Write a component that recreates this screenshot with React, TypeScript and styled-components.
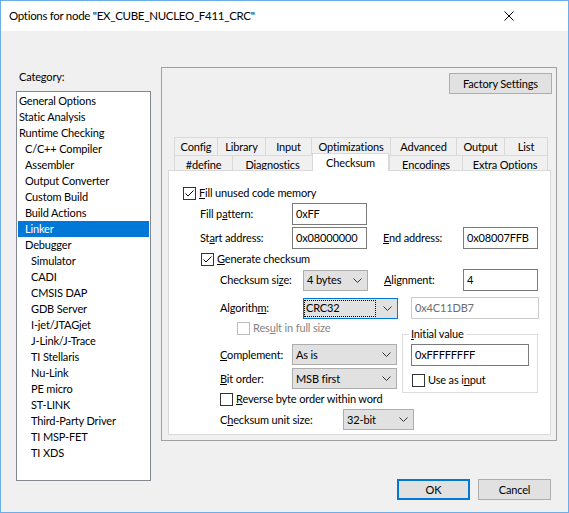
import React from "react";
import styled, { createGlobalStyle } from "styled-components";

const GlobalStyle = createGlobalStyle`
  html, body {
    margin: 0;
    padding: 0;
    background: #ffffff;
  }
  body {
    font-family: Lato, "Noto Sans", sans-serif;
    font-size: 11px;
    letter-spacing: -0.15px;
    line-height: 16px;
    color: #000000;
  }
  * {
    box-sizing: border-box;
  }
  u {
    text-underline-offset: 1px;
  }
`;

const Window = styled.div`
  width: 569px;
  height: 513px;
  border: 1px solid #6caeea;
  background: #f0f0f0;
  display: flex;
  flex-direction: column;
  overflow: hidden;
`;

const TitleBar = styled.div`
  flex: none;
  height: 30px;
  background: #ffffff;
  display: flex;
  align-items: center;
  justify-content: space-between;
  padding-left: 8px;
  font-size: 11.5px;
  letter-spacing: -0.3px;
`;

const CloseIcon = styled.svg`
  width: 10px;
  height: 10px;
  margin-right: 54px;
`;

const Body = styled.div`
  flex: 1;
  display: flex;
  gap: 10px;
  padding: 36px 10px 0 15px;
`;

const LeftCol = styled.div`
  width: 135px;
  flex: none;
  padding-top: 2px;
`;

const CategoryLabel = styled.div`
  padding-left: 3px;
  margin-bottom: 6px;
`;

const ListBox = styled.div`
  height: 390px;
  border: 1px solid #828790;
  background: #ffffff;
  padding: 1px 1px 0;
`;

const ListItem = styled.div<{ $level: number; $selected?: boolean }>`
  height: 16px;
  line-height: 16px;
  padding-left: ${(p) => 1 + p.$level * 6}px;
  white-space: nowrap;
  background: ${(p) => (p.$selected ? "#0078d7" : "transparent")};
  color: ${(p) => (p.$selected ? "#ffffff" : "#000000")};
`;

const RightCol = styled.div`
  width: 396px;
  flex: none;
  display: flex;
  flex-direction: column;
`;

const Panel = styled.div`
  height: 374px;
  border: 1px solid #a0a0a0;
  display: flex;
  flex-direction: column;
`;

const Button = styled.div<{ $w: number; $default?: boolean }>`
  width: ${(p) => p.$w}px;
  height: 21px;
  flex: none;
  display: flex;
  align-items: center;
  justify-content: center;
  background: #e1e1e1;
  border: ${(p) => (p.$default ? "2px solid #0078d7" : "1px solid #adadad")};
`;

const FactoryButton = styled(Button)`
  align-self: flex-end;
  margin: 5px 4px 0 0;
`;

const Tabs = styled.div`
  margin: 43px 0 0 12px;
  width: 374px;
`;

const TabRow = styled.div<{ $h: number }>`
  display: flex;
  height: ${(p) => p.$h}px;
`;

const Tab = styled.div<{ $w: number; $active?: boolean; $last?: boolean }>`
  flex: none;
  width: ${(p) => p.$w}px;
  height: ${(p) => (p.$active ? "18px" : "100%")};
  margin-top: ${(p) => (p.$active ? "-2px" : "0")};
  padding-top: 1px;
  line-height: 16px;
  text-align: center;
  white-space: nowrap;
  background: ${(p) => (p.$active ? "#ffffff" : "#f0f0f0")};
  border-top: 1px solid #d9d9d9;
  border-left: 1px solid #d9d9d9;
  border-right: ${(p) => (p.$active || p.$last ? "1px solid #d9d9d9" : "none")};
  position: ${(p) => (p.$active ? "relative" : "static")};
  z-index: ${(p) => (p.$active ? 1 : "auto")};
`;

const Page = styled.div`
  width: 383px;
  height: 265px;
  margin-left: 6px;
  border: 1px solid #d9d9d9;
  background: #ffffff;
  display: flex;
  flex-direction: column;
`;

const Row = styled.div<{ $h: number; $mt: number; $pl?: number }>`
  display: flex;
  align-items: center;
  flex: none;
  height: ${(p) => p.$h}px;
  margin-top: ${(p) => p.$mt}px;
  padding-left: ${(p) => p.$pl ?? 0}px;
  white-space: nowrap;
`;

const Label = styled.div<{ $w?: number; $disabled?: boolean }>`
  flex: none;
  width: ${(p) => (p.$w ? `${p.$w}px` : "auto")};
  color: ${(p) => (p.$disabled ? "#838383" : "#000000")};
`;

const Box = styled.div<{ $disabled?: boolean }>`
  width: 13px;
  height: 13px;
  flex: none;
  border: 1px solid ${(p) => (p.$disabled ? "#bcbcbc" : "#333333")};
  background: #ffffff;
  margin-right: 3px;
  display: flex;
`;

const Field = styled.div<{ $w: number; $h?: number; $disabled?: boolean }>`
  width: ${(p) => p.$w}px;
  height: ${(p) => p.$h ?? 22}px;
  flex: none;
  display: flex;
  align-items: center;
  padding-left: 3px;
  border: 1px solid ${(p) => (p.$disabled ? "#cccccc" : "#7a7a7a")};
  background: #ffffff;
  color: ${(p) => (p.$disabled ? "#6d6d6d" : "#000000")};
`;

const SelectBox = styled.div<{ $w: number; $focused?: boolean }>`
  width: ${(p) => p.$w}px;
  height: 21px;
  flex: none;
  display: flex;
  align-items: stretch;
  background: #e1e1e1;
  border: 1px solid ${(p) => (p.$focused ? "#0078d7" : "#adadad")};
`;

const SelectValue = styled.div<{ $focused?: boolean }>`
  flex: 1;
  display: flex;
  align-items: center;
  padding-left: ${(p) => (p.$focused ? "1px" : "3px")};
  margin: ${(p) => (p.$focused ? "1px 0 1px 0" : "0")};
  border: ${(p) => (p.$focused ? "1px dotted #000000" : "none")};
`;

const Chevron = styled.svg`
  width: 9px;
  height: 5px;
  flex: none;
  align-self: center;
  margin: 0 5px 0 7px;
`;

const Lower = styled.div`
  display: flex;
  margin-top: 2px;
  padding-left: 51px;
`;

const LowerLeft = styled.div`
  width: 182px;
  flex: none;
  display: flex;
  flex-direction: column;
`;

const Group = styled.fieldset`
  width: 136px;
  height: 66px;
  margin: 6px 0 0 0;
  min-width: 0;
  padding: 3px 8px 0;
  border: 1px solid #dcdcdc;
`;

const Legend = styled.legend`
  padding: 0 2px;
  margin-left: -2px;
  line-height: 14px;
`;

const ButtonBar = styled.div`
  display: flex;
  justify-content: flex-end;
  gap: 8px;
  margin-top: 38px;
  padding-right: 6px;
`;

const categories: [string, number][] = [
  ["General Options", 0],
  ["Static Analysis", 0],
  ["Runtime Checking", 0],
  ["C/C++ Compiler", 1],
  ["Assembler", 1],
  ["Output Converter", 1],
  ["Custom Build", 1],
  ["Build Actions", 1],
  ["Linker", 1],
  ["Debugger", 1],
  ["Simulator", 2],
  ["CADI", 2],
  ["CMSIS DAP", 2],
  ["GDB Server", 2],
  ["I-jet/JTAGjet", 2],
  ["J-Link/J-Trace", 2],
  ["TI Stellaris", 2],
  ["Nu-Link", 2],
  ["PE micro", 2],
  ["ST-LINK", 2],
  ["Third-Party Driver", 2],
  ["TI MSP-FET", 2],
  ["TI XDS", 2],
];

const backTabs: [string, number][] = [
  ["Config", 43],
  ["Library", 48],
  ["Input", 46],
  ["Optimizations", 79],
  ["Advanced", 66],
  ["Output", 48],
  ["List", 44],
];

const frontTabs: [string, number][] = [
  ["#define", 58],
  ["Diagnostics", 80],
  ["Checksum", 77],
  ["Encodings", 73],
  ["Extra Options", 86],
];

const Checkbox = ({ checked, disabled }: { checked?: boolean; disabled?: boolean }) => (
  <Box $disabled={disabled}>
    {checked && (
      <svg width="11" height="11" viewBox="0 0 11 11">
        <path d="M1.5 5.5 L4 8 L9.5 2.5" fill="none" stroke="#000" strokeWidth="1" />
      </svg>
    )}
  </Box>
);

const Select = ({ w, value, focused }: { w: number; value: string; focused?: boolean }) => (
  <SelectBox $w={w} $focused={focused}>
    <SelectValue $focused={focused}>{value}</SelectValue>
    <Chevron viewBox="0 0 9 5">
      <path d="M0.5 0.5 L4.5 4.5 L8.5 0.5" fill="none" stroke="#333" strokeWidth="1" />
    </Chevron>
  </SelectBox>
);

export default function App() {
  return (
    <>
      <GlobalStyle />
      <Window>
        <TitleBar>
          <span>Options for node "EX_CUBE_NUCLEO_F411_CRC"</span>
          <CloseIcon viewBox="0 0 10 10">
            <path d="M0.5 0.5 L9.5 9.5 M9.5 0.5 L0.5 9.5" stroke="#000" strokeWidth="1" />
          </CloseIcon>
        </TitleBar>
        <Body>
          <LeftCol>
            <CategoryLabel>Category:</CategoryLabel>
            <ListBox>
              {categories.map(([name, level]) => (
                <ListItem key={name} $level={level} $selected={name === "Linker"}>
                  {name}
                </ListItem>
              ))}
            </ListBox>
          </LeftCol>
          <RightCol>
            <Panel>
              <FactoryButton $w={103}>Factory Settings</FactoryButton>
              <Tabs>
                <TabRow $h={18}>
                  {backTabs.map(([name, w], i) => (
                    <Tab key={name} $w={w} $last={i === backTabs.length - 1}>
                      {name}
                    </Tab>
                  ))}
                </TabRow>
                <TabRow $h={15}>
                  {frontTabs.map(([name, w], i) => (
                    <Tab
                      key={name}
                      $w={w}
                      $active={name === "Checksum"}
                      $last={i === frontTabs.length - 1}
                    >
                      {name}
                    </Tab>
                  ))}
                </TabRow>
              </Tabs>
              <Page>
                <Row $h={14} $mt={15} $pl={14}>
                  <Checkbox checked />
                  <Label>
                    <u>F</u>ill unused code memory
                  </Label>
                </Row>
                <Row $h={22} $mt={3} $pl={31}>
                  <Label $w={92}>
                    Fill p<u>a</u>ttern:
                  </Label>
                  <Field $w={75}>0xFF</Field>
                </Row>
                <Row $h={22} $mt={2} $pl={31}>
                  <Label $w={92}>
                    St<u>a</u>rt address:
                  </Label>
                  <Field $w={75}>0x08000000</Field>
                  <Label $w={80} style={{ marginLeft: 16 }}>
                    <u>E</u>nd address:
                  </Label>
                  <Field $w={75}>0x08007FFB</Field>
                </Row>
                <Row $h={14} $mt={3} $pl={32}>
                  <Checkbox checked />
                  <Label>
                    <u>G</u>enerate checksum
                  </Label>
                </Row>
                <Row $h={22} $mt={3} $pl={51}>
                  <Label $w={83}>
                    Checksum si<u>z</u>e:
                  </Label>
                  <Select w={65} value="4 bytes" />
                  <Label $w={79} style={{ marginLeft: 16 }}>
                    <u>A</u>lignment:
                  </Label>
                  <Field $w={75}>4</Field>
                </Row>
                <Row $h={22} $mt={6} $pl={51}>
                  <Label $w={83}>
                    Algorith<u>m</u>:
                  </Label>
                  <Select w={95} value="CRC32" focused />
                  <Field $w={128} $disabled style={{ marginLeft: 13 }}>
                    0x4C11DB7
                  </Field>
                </Row>
                <Lower>
                  <LowerLeft>
                    <Row $h={14} $mt={0} $pl={17}>
                      <Checkbox disabled />
                      <Label $disabled>
                        Res<u>u</u>lt in full size
                      </Label>
                    </Row>
                    <Row $h={21} $mt={9}>
                      <Label $w={72}>
                        <u>C</u>omplement:
                      </Label>
                      <Select w={105} value="As is" />
                    </Row>
                    <Row $h={21} $mt={3}>
                      <Label $w={72}>
                        <u>B</u>it order:
                      </Label>
                      <Select w={105} value="MSB first" />
                    </Row>
                    <Row $h={14} $mt={3}>
                      <Checkbox />
                      <Label>
                        <u>R</u>everse byte order within word
                      </Label>
                    </Row>
                    <Row $h={21} $mt={3}>
                      <Label $w={123}>
                        C<u>h</u>ecksum unit size:
                      </Label>
                      <Select w={71} value="32-bit" />
                    </Row>
                  </LowerLeft>
                  <Group>
                    <Legend>
                      <u>I</u>nitial value
                    </Legend>
                    <Field $w={118}>0xFFFFFFFF</Field>
                    <Row $h={14} $mt={7} $pl={1}>
                      <Checkbox />
                      <Label>
                        Use as i<u>n</u>put
                      </Label>
                    </Row>
                  </Group>
                </Lower>
              </Page>
            </Panel>
            <ButtonBar>
              <Button $w={73} $default>
                OK
              </Button>
              <Button $w={73}>Cancel</Button>
            </ButtonBar>
          </RightCol>
        </Body>
      </Window>
    </>
  );
}
